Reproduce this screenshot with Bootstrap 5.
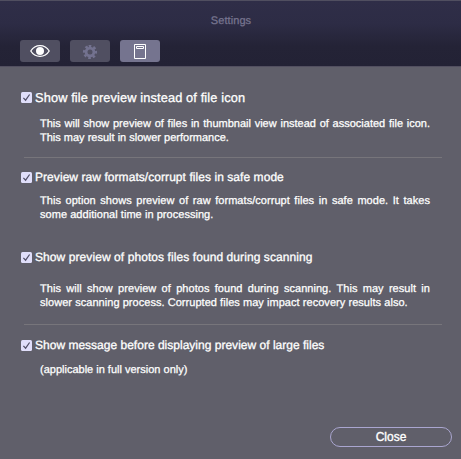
<!DOCTYPE html>
<html lang="en">
<head>
<meta charset="utf-8">
<meta name="viewport" content="width=device-width, initial-scale=1">
<title>Settings</title>
<link href="https://cdn.jsdelivr.net/npm/bootstrap@5.3.0/dist/css/bootstrap.min.css" rel="stylesheet">
<style>
body{background:#605f6a;font-family:"Liberation Sans",Arial,sans-serif;color:#fff;height:459px;overflow:hidden;text-rendering:geometricPrecision}
.top-bar{height:67px;border-top:1px solid #504f60;border-bottom:1px solid #524f60;background:linear-gradient(#2f2e48 0,#2d2c45 35%,#242336 70%,#232235 100%)}
.top-title{font-size:11px;line-height:14px;color:#77758f;padding:13px 0 0 1px;height:39px;letter-spacing:.08px;-webkit-text-stroke:.25px #77758f}
.tools{gap:10px;padding-left:20px}
.tool{width:40px;height:22px;border-radius:3px;background:#504f61;border:0}
.tool.current{background:#75748f}
.tool svg{display:block}
.panel{padding-left:21px}
.opt{height:16px;gap:3px;-webkit-text-stroke:.3px #fff}
.opt label{font-size:12px;line-height:16px;white-space:nowrap}
.opt .form-check-input{width:11px;height:11px;margin:1px 0 0;border:0;border-radius:1.5px;flex:none}
.opt .form-check-input:checked{background:#e0defa url("data:image/svg+xml,%3Csvg xmlns='http://www.w3.org/2000/svg' viewBox='0 0 11 11'%3E%3Cpath d='M2.4 5.8 4.6 8.2 8.6 2.5' fill='none' stroke='%23504e66' stroke-width='1.2'/%3E%3C/svg%3E") center/11px}
.note{margin-left:19px;width:390px;font-size:11px;line-height:14px;-webkit-text-stroke:.25px #fff;white-space:nowrap}
.full{display:block;text-align-last:justify}
.rule{margin:0 0 0 3px;width:418px;height:1px;border:0;background:#77757b;opacity:1}
.o1{margin-top:22px}.n1{margin-top:12px}.r1{margin-top:12px}
.o2{margin-top:11px}.n2{margin-top:9px}
.o3{margin-top:27px}.n3{margin-top:17px}.r3{margin-top:14px}
.o4{margin-top:12px}.n4{margin-top:10px}
.o1 label{font-size:12.8px;letter-spacing:.12px;padding-top:1px}
.o2 label{letter-spacing:.06px}
.o3 label{letter-spacing:.08px}
.o4 label{letter-spacing:.01px}
.n2,.n3{letter-spacing:.045px}
.close-btn{width:122px;height:20px;border:1.4px solid #aaa6d0;border-radius:10px;font-size:12px;line-height:17px;padding:0;color:#fff;margin:50px 9px 0 0;-webkit-text-stroke:.35px #fff}
</style>
<script src="https://cdn.jsdelivr.net/npm/bootstrap@5.3.0/dist/js/bootstrap.bundle.min.js"></script>
</head>
<body>
<header class="top-bar">
  <div class="top-title text-center">Settings</div>
  <nav class="tools d-flex">
    <button class="tool p-0" aria-label="Preview"><svg width="40" height="22" fill="none"><path d="M10.8 11C15.2 3.8 24.8 3.8 29.2 11C24.8 18.2 15.2 18.2 10.8 11Z" stroke="#fff" stroke-width="1.3"/><circle cx="20" cy="11" r="4" fill="#fff"/></svg></button>
    <button class="tool p-0" aria-label="General"><svg width="40" height="22" fill="none" stroke="#73728f"><circle cx="20" cy="12" r="3.9" stroke-width="2.8"/><circle cx="20" cy="12" r="5.8" stroke-width="2.6" stroke-dasharray="2.5 2.055" transform="rotate(-102.3 20 12)"/></svg></button>
    <button class="tool current p-0" aria-label="File"><svg width="40" height="22" fill="none" stroke="#fff"><path d="M14.5 4.5h11v14h-11zM16.5 6.5h7v2h-7z"/></svg></button>
  </nav>
</header>
<main class="panel">
  <div class="opt o1 d-flex align-items-center"><input class="form-check-input" type="checkbox" id="a" checked><label for="a">Show file preview instead of file icon</label></div>
  <div class="note n1"><span class="full">This will show preview of files in thumbnail view instead of associated file icon.</span>This may result in slower performance.</div>
  <hr class="rule r1">
  <div class="opt o2 d-flex align-items-center"><input class="form-check-input" type="checkbox" id="b" checked><label for="b">Preview raw formats/corrupt files in safe mode</label></div>
  <div class="note n2"><span class="full">This option shows preview of raw formats/corrupt files in safe mode. It takes</span>some additional time in processing.</div>
  <div class="opt o3 d-flex align-items-center"><input class="form-check-input" type="checkbox" id="c" checked><label for="c">Show preview of photos files found during scanning</label></div>
  <div class="note n3"><span class="full">This will show preview of photos found during scanning. This may result in</span>slower scanning process. Corrupted files may impact recovery results also.</div>
  <hr class="rule r3">
  <div class="opt o4 d-flex align-items-center"><input class="form-check-input" type="checkbox" id="d" checked><label for="d">Show message before displaying preview of large files</label></div>
  <div class="note n4">(applicable in full version only)</div>
  <div class="d-flex justify-content-end"><button class="btn close-btn">Close</button></div>
</main>
</body>
</html>
